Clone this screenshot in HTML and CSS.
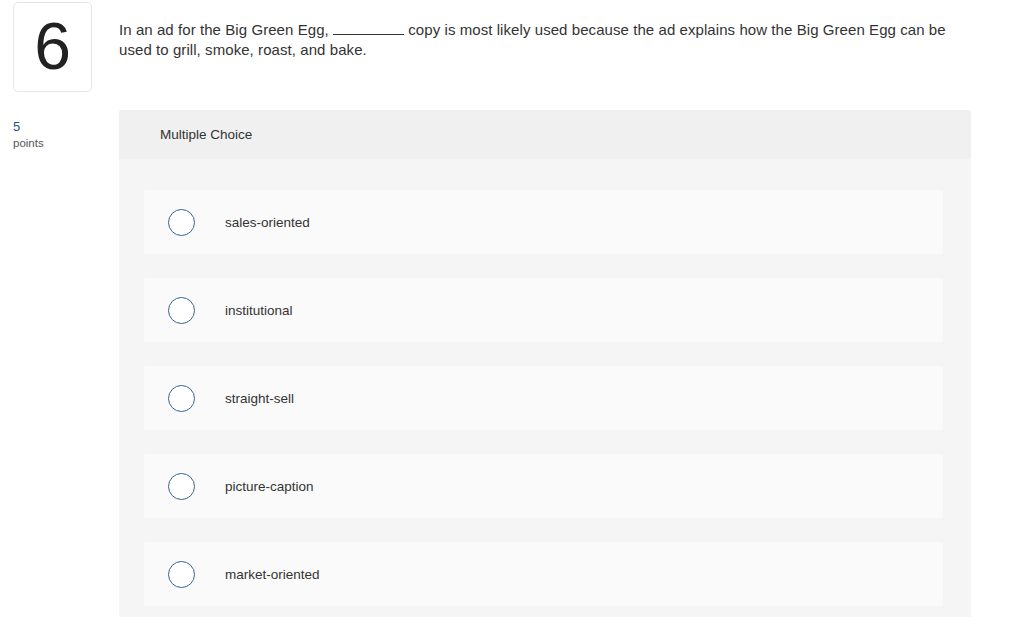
FILE: index.html
```html
<!DOCTYPE html>
<html>
<head>
<meta charset="utf-8">
<link rel="stylesheet" href="styles.css">
</head>
<body>
<div class="page">
  <div class="side">
    <div class="qnum">6</div>
    <div class="points"><span class="pval">5</span><span class="plabel">points</span></div>
  </div>
  <div class="main">
    <p class="question">In an ad for the Big Green Egg, <span class="blank"></span> copy is most likely used because the ad explains how the Big Green Egg can be used to grill, smoke, roast, and bake.</p>
    <div class="panel">
      <div class="panel-head">Multiple Choice</div>
      <div class="panel-body">
        <div class="option"><span class="radio"></span><span class="label">sales-oriented</span></div>
        <div class="option"><span class="radio"></span><span class="label">institutional</span></div>
        <div class="option"><span class="radio"></span><span class="label">straight-sell</span></div>
        <div class="option"><span class="radio"></span><span class="label">picture-caption</span></div>
        <div class="option"><span class="radio"></span><span class="label">market-oriented</span></div>
      </div>
    </div>
  </div>
</div>
</body>
</html>
```
FILE: styles.css
```css
html, body {
  margin: 0;
  padding: 0;
  background: #ffffff;
}
body {
  font-family: "Liberation Sans", Arial, sans-serif;
  color: #333333;
}
.page {
  display: flex;
  padding: 2px 0 0 13px;
}
.side {
  width: 106px;
  flex: none;
  display: flex;
  flex-direction: column;
}
.qnum {
  box-sizing: border-box;
  width: 79px;
  height: 90px;
  border: 1px solid #e6e6e6;
  border-radius: 5px;
  display: flex;
  align-items: center;
  justify-content: center;
  font-size: 66px;
  color: #222222;
  line-height: 1;
  padding-bottom: 2px;
}
.points {
  display: flex;
  flex-direction: column;
  margin-top: 27px;
}
.pval {
  font-size: 13px;
  color: #1b4f95;
  line-height: 16px;
}
.plabel {
  font-size: 11.5px;
  color: #555555;
  line-height: 16px;
}
.main {
  width: 852px;
  flex: none;
}
.question {
  margin: 18px 0 0 0;
  font-size: 15px;
  line-height: 20px;
  color: #333333;
  letter-spacing: 0.07px;
  padding-right: 20px;
}
.blank {
  display: inline-block;
  width: 71px;
  height: 1px;
  background: #333333;
  vertical-align: baseline;
}
.panel {
  margin-top: 50px;
  background: #f5f5f5;
  border-radius: 3px 3px 0 0;
}
.panel-head {
  height: 49px;
  background: #f0f0f0;
  border-radius: 3px 3px 0 0;
  display: flex;
  align-items: center;
  padding-left: 41px;
  font-size: 13.5px;
  color: #333333;
}
.panel-body {
  display: flex;
  flex-direction: column;
  gap: 24px;
  padding: 31px 28px 11px 25px;
}
.option {
  height: 64px;
  background: #fafafa;
  border-radius: 3px;
  display: flex;
  align-items: center;
  padding-left: 24px;
}
.radio {
  box-sizing: border-box;
  width: 27px;
  height: 27px;
  border: 1px solid #3d6296;
  border-radius: 50%;
  background: #ffffff;
  flex: none;
}
.label {
  margin-left: 30px;
  font-size: 13.5px;
  color: #333333;
}
```
